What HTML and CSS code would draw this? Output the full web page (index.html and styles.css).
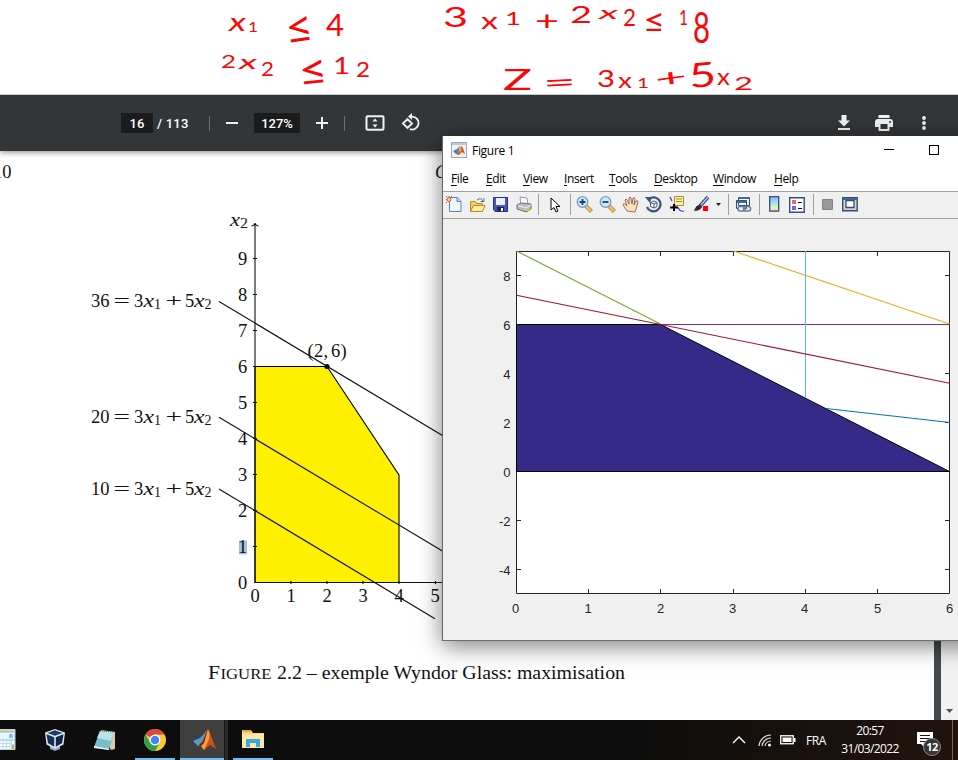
FILE: index.html
```html
<!DOCTYPE html>
<html lang="fr">
<head>
<meta charset="utf-8">
<title>Wyndor Glass</title>
<link rel="stylesheet" href="styles.css">
</head>
<body>
<div class="desktop">
  <header class="notes">
    <svg class="ink" width="958" height="94" viewBox="0 0 958 94">
      <g>
        <text class="x" x="229" y="31" font-size="25" textLength="17" lengthAdjust="spacingAndGlyphs">x</text>
        <text x="248" y="32" font-size="13" textLength="10" lengthAdjust="spacingAndGlyphs">1</text>
        <text x="285" y="43" font-size="44" textLength="28" lengthAdjust="spacingAndGlyphs" transform="rotate(-8 299 30)">≤</text>
        <text x="326" y="36" font-size="30" textLength="18" lengthAdjust="spacingAndGlyphs">4</text>
      </g>
      <g>
        <text x="221" y="68" font-size="18" textLength="15" lengthAdjust="spacingAndGlyphs">2</text>
        <text class="x" x="239" y="69" font-size="20" textLength="18" lengthAdjust="spacingAndGlyphs">x</text>
        <text x="261" y="76" font-size="19" textLength="13" lengthAdjust="spacingAndGlyphs">2</text>
        <text x="298" y="85" font-size="42" textLength="29" lengthAdjust="spacingAndGlyphs" transform="rotate(-6 312 70)">≤</text>
        <text x="333" y="74" font-size="24" textLength="17" lengthAdjust="spacingAndGlyphs">1</text>
        <text x="356" y="77" font-size="21" textLength="14" lengthAdjust="spacingAndGlyphs">2</text>
      </g>
      <g>
        <text x="443" y="27" font-size="26" textLength="25" lengthAdjust="spacingAndGlyphs">3</text>
        <text x="481" y="29" font-size="23" textLength="17" lengthAdjust="spacingAndGlyphs">x</text>
        <text x="505" y="25" font-size="17" textLength="16" lengthAdjust="spacingAndGlyphs">1</text>
        <text x="535" y="30" font-size="26" textLength="24" lengthAdjust="spacingAndGlyphs">+</text>
        <text x="570" y="23" font-size="23" textLength="22" lengthAdjust="spacingAndGlyphs">2</text>
        <text class="x" x="599" y="19" font-size="18" textLength="19" lengthAdjust="spacingAndGlyphs">x</text>
        <text x="623" y="26" font-size="24" textLength="13" lengthAdjust="spacingAndGlyphs">2</text>
        <text x="643" y="32" font-size="32" textLength="22" lengthAdjust="spacingAndGlyphs">≤</text>
        <text x="679" y="25" font-size="21" textLength="9" lengthAdjust="spacingAndGlyphs">1</text>
        <text x="693" y="43" font-size="43" textLength="17" lengthAdjust="spacingAndGlyphs">8</text>
      </g>
      <g>
        <text x="503" y="90" font-size="29" textLength="29" lengthAdjust="spacingAndGlyphs">Z</text>
        <text x="543" y="92" font-size="27" textLength="33" lengthAdjust="spacingAndGlyphs" transform="rotate(-3 559 83)">=</text>
        <text x="597" y="87" font-size="24" textLength="18" lengthAdjust="spacingAndGlyphs">3</text>
        <text x="618" y="88" font-size="22" textLength="14" lengthAdjust="spacingAndGlyphs">x</text>
        <text x="637" y="88" font-size="14" textLength="12" lengthAdjust="spacingAndGlyphs">1</text>
        <text x="655" y="86" font-size="24" textLength="32" lengthAdjust="spacingAndGlyphs" transform="rotate(-8 671 78)">+</text>
        <text x="689" y="87" font-size="34" textLength="27" lengthAdjust="spacingAndGlyphs" transform="rotate(-5 702 75)">5</text>
        <text x="717" y="85" font-size="23" textLength="13" lengthAdjust="spacingAndGlyphs">x</text>
        <text x="734" y="90" font-size="17" textLength="19" lengthAdjust="spacingAndGlyphs">2</text>
      </g>
    </svg>
  </header>

  <nav class="pdfbar">
    <div class="page-no"><span>16</span></div>
    <span class="of">/&nbsp;113</span>
    <i class="rule r1"></i>
    <svg class="minus" width="14" height="14"><path d="M1 7h12" stroke="#f1f1f1" stroke-width="2"/></svg>
    <div class="zoom-level"><span>127%</span></div>
    <svg class="plus" width="14" height="14"><path d="M1 7h12M7 1v12" stroke="#f1f1f1" stroke-width="2"/></svg>
    <i class="rule r2"></i>
    <svg class="fit" width="20" height="16"><rect x="1.5" y="1.2" width="17" height="13.6" rx="1" fill="none" stroke="#f1f1f1" stroke-width="2"/><path d="M10 3.5l2.6 3H7.4zM10 12.5l2.6-3H7.4z" fill="#f1f1f1"/></svg>
    <svg class="rotate" width="20" height="20" viewBox="0 0 20 20"><path d="M2 10.5l4.5-4.5 4.5 4.5-4.5 4.5zM8.5 3.6h2.6a6.5 6.5 0 1 1-2.3 12.6" fill="none" stroke="#f1f1f1" stroke-width="1.9"/><path d="M7 3.6L11 0v7z" fill="#f1f1f1"/></svg>
    <div class="spacer"></div>
    <svg class="dl" width="14" height="16"><path d="M4.5 0h5v5.500H13L7 11.500 1 5.500h3.500zM1 13h12v2H1z" fill="#f1f1f1"/></svg>
    <svg class="print" width="18" height="16"><path d="M3.500 0h11v3h-11zM3 4h12a3 3 0 0 1 3 3v5h-3.500v4h-11v-4H0V7a3 3 0 0 1 3-3z" fill="#f1f1f1"/><path d="M5.500 9h7v5h-7z" fill="#323639"/><circle cx="15" cy="7" r="1" fill="#323639"/></svg>
    <svg class="dots" width="6" height="16"><circle cx="3" cy="3" r="1.900"/><circle cx="3" cy="8" r="1.900"/><circle cx="3" cy="13" r="1.900"/></svg>
  </nav>

  <main class="viewer">
    <section class="page">
      <svg class="sheet" width="934" height="569" viewBox="0 151 934 569">
        <text x="-7" y="178" font-size="18.500">10</text>
        <text x="435" y="178" font-size="18" font-style="italic">C</text>
        <rect x="239" y="540.500" width="8" height="14" fill="#9fc3dc"/>
        <path d="M255 366.500h72l72 108.500v107.500H255z" fill="#ffef00" stroke="#000" stroke-width="1.100"/>
        <g fill="none" stroke="#111" stroke-width="1.100">
          <path d="M255 583V223M251.500 226q3-.5 3.500-3q.5 2.500 3.500 3M255 582.500H470"/>
          <path d="M253 258.500h4M253 294.500h4M253 330.500h4M253 366.500h4M253 402.500h4M253 438.500h4M253 474.500h4M253 510.500h4M253 546.500h4M291 581v3M327 581v3M363 581v3M399 581v3M435.500 581v3"/>
          <path d="M219 301.500L470 452M219 417.300L470 567.500M219 489L435 618.700"/>
        </g>
        <circle cx="327" cy="366.500" r="2.600"/>
        <g font-size="18.500" text-anchor="middle">
          <text x="242.500" y="265">9</text><text x="242.500" y="301">8</text><text x="242.500" y="337">7</text><text x="242.500" y="373">6</text><text x="242.500" y="409">5</text><text x="242.500" y="445">4</text><text x="242.500" y="481">3</text><text x="242.500" y="517">2</text><text x="242.500" y="553">1</text><text x="242.500" y="589">0</text>
          <text x="255" y="602">0</text><text x="291" y="602">1</text><text x="327" y="602">2</text><text x="363" y="602">3</text><text x="399" y="602">4</text><text x="435" y="602">5</text>
        </g>
        <g font-size="18.500">
          <g><text class="var" x="230" y="226" textLength="10" lengthAdjust="spacingAndGlyphs">x</text><text class="sub" x="240" y="228" textLength="8" lengthAdjust="spacingAndGlyphs">2</text></g>
          <g><text x="91" y="307">36</text><text x="113.500" y="307" textLength="16.500" lengthAdjust="spacingAndGlyphs">=</text><text x="134" y="307">3</text><text class="var" x="143.500" y="307" textLength="10.500" lengthAdjust="spacingAndGlyphs">x</text><text class="sub" x="154" y="309">1</text><text x="165.500" y="307" textLength="16.500" lengthAdjust="spacingAndGlyphs">+</text><text x="185" y="307">5</text><text class="var" x="194" y="307" textLength="10.500" lengthAdjust="spacingAndGlyphs">x</text><text class="sub" x="204.500" y="309">2</text></g>
          <g><text x="91" y="423">20</text><text x="113.500" y="423" textLength="16.500" lengthAdjust="spacingAndGlyphs">=</text><text x="134" y="423">3</text><text class="var" x="143.500" y="423" textLength="10.500" lengthAdjust="spacingAndGlyphs">x</text><text class="sub" x="154" y="425">1</text><text x="165.500" y="423" textLength="16.500" lengthAdjust="spacingAndGlyphs">+</text><text x="185" y="423">5</text><text class="var" x="194" y="423" textLength="10.500" lengthAdjust="spacingAndGlyphs">x</text><text class="sub" x="204.500" y="425">2</text></g>
          <g><text x="91" y="495">10</text><text x="113.500" y="495" textLength="16.500" lengthAdjust="spacingAndGlyphs">=</text><text x="134" y="495">3</text><text class="var" x="143.500" y="495" textLength="10.500" lengthAdjust="spacingAndGlyphs">x</text><text class="sub" x="154" y="497">1</text><text x="165.500" y="495" textLength="16.500" lengthAdjust="spacingAndGlyphs">+</text><text x="185" y="495">5</text><text class="var" x="194" y="495" textLength="10.500" lengthAdjust="spacingAndGlyphs">x</text><text class="sub" x="204.500" y="497">2</text></g>
          <text y="357"><tspan x="307.500">(</tspan><tspan x="314">2</tspan><tspan x="323.500">,</tspan><tspan x="331">6</tspan><tspan x="340.500">)</tspan></text>
          <text x="208" y="679" textLength="12" lengthAdjust="spacingAndGlyphs">F</text><text x="220.500" y="679" font-size="14.500" textLength="51" lengthAdjust="spacingAndGlyphs">IGURE</text>
          <text x="277" y="679" textLength="348" lengthAdjust="spacingAndGlyphs">2.2 – exemple Wyndor Glass: maximisation</text>
        </g>
      </svg>
    </section>
    <div class="gutter"></div>
    <div class="scrollbar"><svg width="8" height="5"><path d="M0 0h7L3.500 4z" fill="#505050"/></svg></div>
  </main>

  <footer class="taskbar">
    <div class="slot calc"><svg width="16" height="24"><rect x="-6" y="1" width="21.500" height="21" rx="1" fill="#b4dcf4"/><path d="M0 3h14v1H0z" fill="#f7b03c"/><rect x="-4" y="5" width="18" height="6" fill="#e8f6ff"/><path d="M10 7h3M10 9h3M10 6v4" stroke="#5b8db4"/><path d="M0 14h11M0 17h11M0 20h11" stroke="#fff" stroke-width="2" stroke-dasharray="2.500 1"/><path d="M12 13h2v3h-2z" fill="#fff"/><path d="M12 17h2v4h-2z" fill="#f1a23b"/></svg></div>
    <div class="slot"><svg width="22" height="24"><path d="M6 17l5 2 5-2v4l-5 2-5-2z" fill="#8fa3c4"/><path d="M11 1l10 3.500-1.500 12L11 21 2.500 16.500 1 4.500z" fill="#dce6f3"/><path d="M11 2.200l7.500 2.700-7.500 2.800-7.500-2.800z" fill="#1c3c68"/><path d="M2.500 6.300l7.700 3v9.500l-6.200-3.500z" fill="#143259"/><path d="M19.500 6.300l-7.700 3v9.500l6.200-3.500z" fill="#0d2547"/></svg></div>
    <div class="slot"><svg width="24" height="24"><path d="M8 2l14 2v17l-4 1z" fill="#d9c9a4"/><path d="M7 3l14 1-5 18L1 19z" fill="#78bcc9"/><path d="M7 3l14 1-3 9-14-3z" fill="#b9e2e7"/><path d="M1 18l15 3v1L1 20z" fill="#edfaff"/><path d="M7 3l14 1" stroke="#5a6468" stroke-dasharray="1 1"/></svg></div>
    <div class="slot open"><svg width="24" height="24" viewBox="0 0 48 48"><circle cx="24" cy="24" r="22" fill="#fbc934"/><path d="M24 24L5 13A22 22 0 0 1 43 13H24z" fill="#d9483b"/><path d="M5 13A22 22 0 0 0 24 46l9.500-17L24 24 14.500 29.500z" fill="#2aa24c"/><circle cx="24" cy="24" r="11" fill="#fff"/><circle cx="24" cy="24" r="8.500" fill="#4285f4"/></svg></div>
    <div class="slot active"><div class="hot"><svg width="24" height="24" viewBox="0 0 24 24"><path d="M1 13l7-3 4-4 3-4-5 14-4 2z" fill="#4da0cb"/><path d="M6 17l4-2 5-13q2-2 4 6l5 13-6-4-6 5-3-4z" fill="#d4511e"/><path d="M16 2q2 2 1 9l-5 11-3-4q4-4 7-16z" fill="#f5a431"/><path d="M15 3l-3 12-3 3-2-1 4-4z" fill="#7c1c18"/></svg></div><i></i></div>
    <div class="slot open"><svg width="24" height="24"><path d="M1 2h9l2 3h11v15H1z" fill="#f6d57a"/><path d="M1 6h22v14H1z" fill="#ffe9a2"/><path d="M2 2h8v2H2z" fill="#e9ac27"/><path d="M5 19v-8h14v8h-4v-4H9v4z" fill="#3aa8e6"/></svg></div>
    <div class="spacer"></div>
    <div class="tray">
      <svg class="chev" width="14" height="8"><path d="M1 7l6-6 6 6" fill="none" stroke="#fff" stroke-width="1.400"/></svg>
      <svg class="wifi" width="14" height="14"><path d="M1 13A12 12 0 0 1 13 2M4 13a9 9 0 0 1 9-8M7 13a6 6 0 0 1 6-5" fill="none" stroke="#ddd" stroke-width="1.200"/><circle cx="11.500" cy="12" r="1.500" fill="#fff"/></svg>
      <svg class="batt" width="16" height="10"><rect x=".75" y=".75" width="12.500" height="8" fill="none" stroke="#fff" stroke-width="1.300"/><path d="M2.500 2.500h9v4.500h-9zM14 3h1.500v4H14z" fill="#fff"/></svg>
      <span class="lang">FRA</span>
      <div class="clock"><span>20:57</span><span>31/03/2022</span></div>
      <div class="notif"><svg width="17" height="17"><path d="M0 0h16v12h-8v4l-4-4H0z" fill="#fff"/><path d="M3 3.500h10M3 6.500h10M3 9.500h7" stroke="#1c130e"/></svg><b>12</b></div>
      <i class="peek"></i>
    </div>
  </footer>

  <section class="window">
    <div class="titlebar">
      <svg width="16" height="16"><rect x=".5" y=".5" width="15" height="15" fill="#eef2f6" stroke="#9aabbd"/><path d="M1 1h14v2H1z" fill="#b9c9dc"/><path d="M2 9l4-2 3-3-2 7-2 1z" fill="#4384b5"/><path d="M5 12l3-3 2-5q1.500 0 4 8l-3-2-3 3z" fill="#d8511d"/><path d="M9.500 5l1.500 3-3 4z" fill="#f5a431"/></svg>
      <span class="title">Figure 1</span>
      <div class="spacer"></div>
      <svg class="min" width="10" height="10"><path d="M0 4.500h10" stroke="#000"/></svg>
      <svg class="max" width="10" height="10"><rect x=".5" y=".5" width="9" height="9" fill="none" stroke="#000"/></svg>
    </div>
    <div class="menubar"><span><u>F</u>ile</span><span><u>E</u>dit</span><span><u>V</u>iew</span><span><u>I</u>nsert</span><span><u>T</u>ools</span><span><u>D</u>esktop</span><span><u>W</u>indow</span><span><u>H</u>elp</span></div>
    <div class="tools">
      <div><svg width="17" height="17"><path d="M3.500 1.500h8l3.500 4v10h-11.500z" fill="#eff7ff" stroke="#5d83bd"/><path d="M11 1.500v4h4" fill="#c6daf4" stroke="#5d83bd"/><circle cx="3" cy="3.500" r="2" fill="#ffd9a8" stroke="#d6522c"/><path d="M3 0v1M0 3.500h1M0 0l1 1M6 0L5 1M0 7l1-1" stroke="#d6522c"/></svg></div>
      <div><svg width="17" height="16"><path d="M1.500 14.500v-10h5l1 2h6v8z" fill="#f4cf5c" stroke="#b98b26"/><path d="M1.500 14.500l3-6h11.500l-2.500 6z" fill="#fff0a0" stroke="#b98b26"/><path d="M8 3q4-3 6 1m1-3v3.500h-3.500" fill="none" stroke="#54708e"/></svg></div>
      <div><svg width="15" height="15"><path d="M.5.5h14v14H2l-1.500-2z" fill="#4957bb" stroke="#28327e"/><path d="M3 1h9v7H3z" fill="#e9f2fc"/><path d="M4 10h7v4H4z" fill="#1e244f"/><path d="M8 11h2v3H8z" fill="#fff"/></svg></div>
      <div><svg width="16" height="17"><path d="M4 1l7 1 1 7H5z" fill="#f8fbff" stroke="#8c9cb2"/><path d="M1 9l4-2 10 1v5l-5 3-9-3z" fill="#bdbdbd" stroke="#707070"/><path d="M2 9.500l8 2.500 5-3" fill="none" stroke="#f5f5f5"/><path d="M11 14l3-1.500" stroke="#e1c322" stroke-width="2"/></svg></div>
      <i></i>
      <div><svg width="12" height="16"><path d="M2 1v12l3-2.500 2 4.500 2-1-2-4.500h4z" fill="#fff" stroke="#000"/></svg></div>
      <i></i>
      <div><svg width="17" height="17"><path d="M10 10l5.500 5.500" stroke="#b08440" stroke-width="4"/><path d="M10 10l5 5" stroke="#f2bf61" stroke-width="2.500"/><circle cx="6.500" cy="6" r="5.300" fill="#cfe9fb" stroke="#719dc5" stroke-width="1.300"/><path d="M3.500 6h6M6.500 3v6" stroke="#164274" stroke-width="1.800"/></svg></div>
      <div><svg width="17" height="17"><path d="M10 10l5.500 5.500" stroke="#b08440" stroke-width="4"/><path d="M10 10l5 5" stroke="#f2bf61" stroke-width="2.500"/><circle cx="6.500" cy="6" r="5.300" fill="#cfe9fb" stroke="#719dc5" stroke-width="1.300"/><path d="M3.500 6h6" stroke="#164274" stroke-width="1.800"/></svg></div>
      <div><svg width="17" height="17"><path d="M5 15L1 9q0-2 2-1l2 2-2-6q1-2 2 0l2 4V2q1-2 2 0l1 6 1-6q2-1 2 1l-1 6 2-4q2-1 2 1l-2 7-1 3z" fill="#ffe1bd" stroke="#8c6245" stroke-width=".9"/></svg></div>
      <div><svg width="17" height="17"><path d="M4 3a7 7 0 1 1-2 8" fill="none" stroke="#3c567b" stroke-width="2.300"/><path d="M0 1l7 0-2 6z" fill="#3c567b"/><path d="M5.500 6.500l3.500-1.500 3 1.500v4L9 12l-3.500-1.500zM9 8v4M5.500 6.500L9 8l3-1.500" fill="#fff" stroke="#3c567b"/></svg></div>
      <div><svg width="17" height="17"><path d="M1 1l2 4M3 11q6-1 7 2t5 2" fill="none" stroke="#3547dc" stroke-width="1.200"/><path d="M5.500.5h9v9h-9z" fill="#fff0a1" stroke="#a18c3e"/><path d="M7 3h6M7 5.500h6" stroke="#a18c3e"/><path d="M1 11.500h8M5 8v7" stroke="#000" stroke-width="2"/></svg></div>
      <div><svg width="17" height="17"><path d="M15 1L7 10" stroke="#303a75" stroke-width="3.600"/><path d="M15 1L8 9" stroke="#b3bfec" stroke-width="1.700"/><path d="M1 15q2-6 5-6l3 2q-2 4-8 4z" fill="#302a37"/><path d="M10 10h5v5h-5z" fill="#f00"/></svg></div>
      <div><svg width="5" height="4"><path d="M0 0h5L2.500 3z" fill="#222"/></svg></div>
      <i></i>
      <div><svg width="17" height="17"><path d="M3.500 1.500h11v8h-11zM1.500 4.500h10v8h-10z" fill="#eef5ff" stroke="#304e7c"/><path d="M2 5h9v2H2zM4 1h11v2H4z" fill="#49699b"/><rect x="3" y="10.500" width="7" height="4.500" rx="2" fill="#eee" stroke="#697d96" stroke-width="1.500"/><rect x="8.500" y="10.500" width="7" height="4.500" rx="2" fill="none" stroke="#697d96" stroke-width="1.500"/></svg></div>
      <i></i>
      <div class="cbar"><svg width="11" height="17"><defs><linearGradient id="bar" x2="0" y2="1"><stop stop-color="#9baaf4"/><stop offset=".5" stop-color="#a3efee"/><stop offset=".8" stop-color="#fbf0a5"/><stop offset="1" stop-color="#ffc0a4"/></linearGradient></defs><path d="M.7.7h9v14.500h-9z" fill="url(#bar)" stroke="#304e7c" stroke-width="1.300"/></svg></div>
      <div><svg width="16" height="16"><path d="M.7.7h14.500v14.500H.7z" fill="#fff" stroke="#304e7c" stroke-width="1.400"/><path d="M3 3h4v4H3z" fill="#e56868"/><path d="M3 9h4v4H3z" fill="#6b6be5"/><path d="M9 5.500h4M9 11.500h4" stroke="#000"/></svg></div>
      <i></i>
      <div><svg width="12" height="12"><path d="M.5.500h10v10H.5z" fill="#999" stroke="#838383"/></svg></div>
      <div><svg width="16" height="16"><path d="M.7.700h14.500v13H.7z" fill="#d3d3c8" stroke="#304e7c" stroke-width="1.400"/><path d="M1 1h14v2H1z" fill="#49699b"/><path d="M4 3.500h8v7H4z" fill="#fff" stroke="#304e7c" stroke-width="1.300"/></svg></div>
    </div>
    <svg class="plot" width="515" height="421" viewBox="443 219 515 421">
      <path d="M516.500 251.500h433v342h-433z" fill="#fff" stroke="#262626"/>
      <path d="M588.500 251v5M660.500 251v5M733.500 251v5M805.500 251v5M877.500 251v5M588.500 594v-5M660.500 594v-5M733.500 594v-5M805.500 594v-5M877.500 594v-5M516 275.500h5M516 520.500h5M516 569.500h5M950 275.500h-5M950 373.500h-5M950 422.500h-5M950 520.500h-5M950 569.500h-5" stroke="#262626"/>
      <path d="M516.500 324.500h144L949.500 471.500h-433z" fill="#352a87" stroke="#000"/>
      <g fill="none" stroke-width="1.150">
        <path d="M826 408.500l124 14" stroke="#0072bd"/>
        <path d="M733.500 251l216 73" stroke="#edb120"/>
        <path d="M660 324.500h290" stroke="#7e2f8e" stroke-width="1"/>
        <path d="M516.500 251l144 73" stroke="#77ac30"/>
        <path d="M805.500 251v147" stroke="#4dbeee" stroke-width="1"/>
        <path d="M516.500 295.200l433 88" stroke="#a2142f"/>
      </g>
      <g text-anchor="end"><text x="510.500" y="281">8</text><text x="510.500" y="330">6</text><text x="510.500" y="379">4</text><text x="510.500" y="428">2</text><text x="510.500" y="477">0</text><text x="510.500" y="526">-2</text><text x="510.500" y="575">-4</text></g>
      <g text-anchor="middle"><text x="515.500" y="613">0</text><text x="588" y="613">1</text><text x="660.500" y="613">2</text><text x="732.500" y="613">3</text><text x="804.500" y="613">4</text><text x="877.500" y="613">5</text><text x="949.500" y="613">6</text></g>
    </svg>
  </section>
</div>
</body>
</html>
```
FILE: styles.css
```css
* { box-sizing: border-box; }
body { margin: 0; background: #fff; font-family: "Open Sans", sans-serif; }
svg { display: block; flex: none; }
.desktop { position: relative; width: 958px; height: 760px; overflow: hidden; display: flex; flex-direction: column; }
.spacer { flex: 1; }

.notes { height: 94px; flex: none; background: #fff; position: relative; z-index: 1; }
.ink { font-family: Lato, sans-serif; fill: #fb0505; overflow: visible; }
.x { font-style: italic; }

.pdfbar { height: 57px; flex: none; display: flex; align-items: center; background: #323639; border-top: 1px solid #c8c8c8; padding: 0 31px 0 121px; position: relative; box-shadow: 0 1px 6px rgba(0,0,0,.5); font: 500 13px Roboto, sans-serif; color: #fff; }
.page-no, .zoom-level { height: 20px; background: #191b1c; display: flex; align-items: center; justify-content: center; }
.page-no { width: 32px; }
.zoom-level { width: 46px; margin-left: 15px; }
.of { width: 36px; margin-left: 4px; letter-spacing: .2px; white-space: nowrap; }
.rule { width: 1px; height: 15px; background: #6e7173; }
.r1 { margin-left: 16px; }
.minus { margin-left: 15px; }
.plus { margin-left: 15px; }
.r2 { margin-left: 15px; }
.fit { margin-left: 20px; }
.rotate { margin-left: 16px; }
.print { margin-left: 24px; }
.dots { margin-left: 28px; fill: #f1f1f1; }

.viewer { flex: 1; display: flex; min-height: 0; }
.page { width: 934px; background: #fff; }
.sheet { font-family: "Liberation Serif", serif; fill: #111; }
.var { font-style: italic; }
.sub { font-size: 14px; }
.gutter { width: 7px; background: #43494d; }
.scrollbar { width: 17px; background: #f1f1f1; display: flex; align-items: flex-end; justify-content: center; padding: 0 0 6px 1px; }

.taskbar { height: 40px; flex: none; position: relative; z-index: 3; display: flex; background: linear-gradient(90deg, #0d0d0d 0 65%, #15100c 78%, #20130d); color: #fff; }
.slot { width: 50px; display: flex; align-items: center; justify-content: center; }
.calc { width: 30px; justify-content: flex-start; }
.open { background: linear-gradient(#76b9ed, #76b9ed) center bottom / 40px 2px no-repeat; }
.active { width: 48px; align-items: stretch; }
.active i { width: 4px; background: #2b2b2b; border-left: 1px solid #161616; }
.hot { flex: 1; background: #3f3f3f; border-bottom: 2px solid #76b9ed; display: flex; align-items: center; justify-content: center; padding: 2px 0 0 4px; }
.tray { display: flex; align-items: center; width: 226px; }
.wifi { margin-left: 12px; }
.batt { margin-left: 8px; }
.lang { width: 22px; margin-left: 10px; font-size: 12px; letter-spacing: -.4px; white-space: nowrap; }
.clock { width: 60px; margin-left: 12px; display: flex; flex-direction: column; align-items: center; font-size: 12px; line-height: 18px; letter-spacing: -.6px; white-space: nowrap; }
.notif { position: relative; margin-left: 17px; width: 25px; }
.notif b { position: absolute; left: 6px; top: 6px; width: 18px; height: 18px; border-radius: 50%; background: #353535; border: 1px solid #8a8a8a; font: bold 11px/16px "Open Sans", sans-serif; letter-spacing: -.5px; text-align: center; }
.peek { width: 1px; height: 40px; background: #6d6661; margin-left: 10px; }

.window { position: absolute; z-index: 2; left: 442px; top: 136px; width: 540px; height: 505px; background: #f0f0f0; border-left: 1px solid #666; border-bottom: 1px solid #707070; box-shadow: 0 5px 22px rgba(0,0,0,.5); }
.titlebar { height: 30px; width: 515px; background: #fff; display: flex; align-items: center; padding: 0 19px 2px 8px; font-size: 12px; }
.title { margin-left: 5px; letter-spacing: -.3px; color: #000; }
.min { margin-right: 35px; }
.menubar { height: 26px; width: 515px; background: #fff; border-bottom: 1px solid #a0a0a0; display: grid; grid-template-columns: 35px 37px 41px 45px 45px 59px 61px 1fr; align-items: center; padding: 0 0 0 8px; font-size: 12px; letter-spacing: -.4px; color: #000; }
.menubar u { text-underline-offset: 2px; }
.tools { height: 27px; width: 515px; display: grid; grid-template-columns: 23px 23px 23px 23px 7px 25px 6px 23px 23px 23px 23px 24px 24px 10px 10px 20px 12px 20px 24px 8px 22px 22px; align-items: center; justify-items: center; border-bottom: 1px solid #a0a0a0; padding-bottom: 1px; }
.tools i { width: 1px; height: 21px; background: #a0a0a0; }
.cbar { padding-right: 2px; }
.plot { font: 13px "Liberation Sans", sans-serif; fill: #262626; }
```
